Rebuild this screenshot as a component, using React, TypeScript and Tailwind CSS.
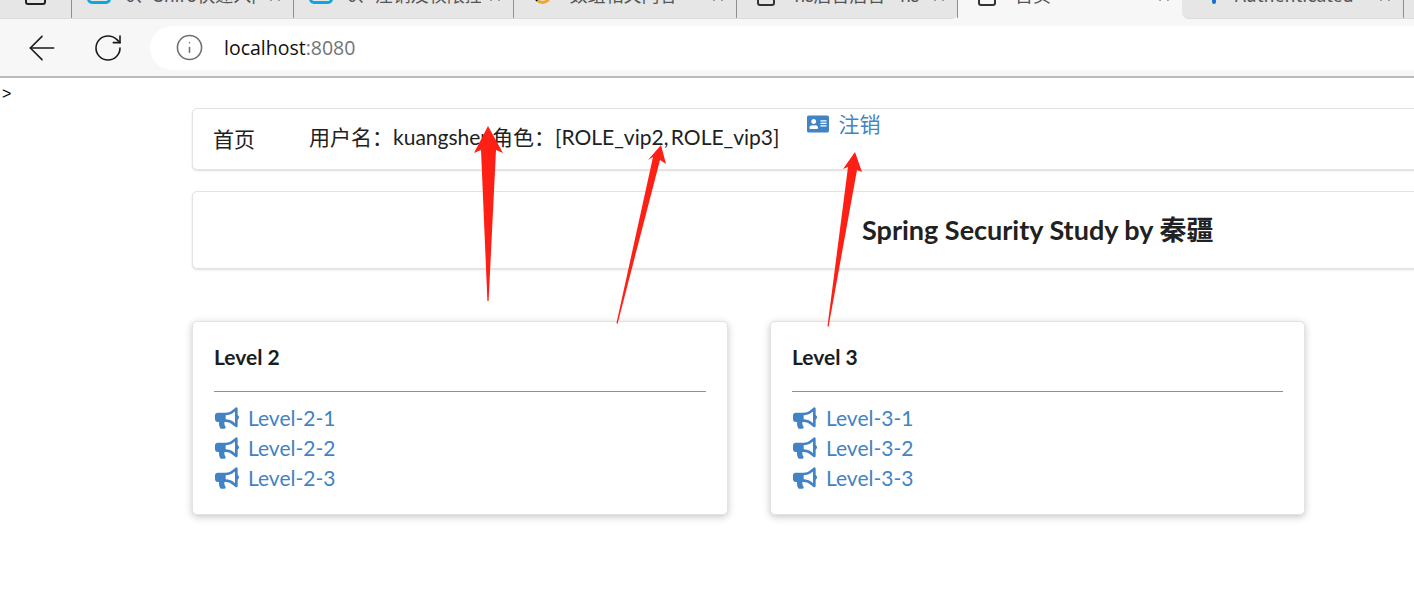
import { ArrowLeft, Info, RotateCw, X } from 'lucide-react'
import { FaAddressCard, FaBullhorn } from 'react-icons/fa'

const FONT = "font-['Lato','Noto_Sans_CJK_SC',sans-serif]"

const LEFT_TABS = [
  { width: 'w-[222px]', title: '6、Shiro快速入门', icon: 'box' },
  { width: 'w-[221px]', title: '6、注销及权限控', icon: 'box' },
  { width: 'w-[223px]', title: '数组相关内容', icon: 'ring' },
  { width: 'w-[221px]', title: 'hs后台后台 - hs', icon: 'page' },
]

// icon box plus the padding that puts the title where it sits in each tab
const ICON_CLASS: Record<string, string> = {
  box: 'ml-[15px] mr-[14px] mt-[-19px] h-[23px] w-[24px] rounded-[5px] border-[3px] border-[#10a5dc]',
  ring: 'ml-[20px] mr-[18px] mt-[-17px] h-[21px] w-[17px] rounded-full border-[3px] border-b-[#f0a52c] border-l-black border-r-[#f0a52c] border-t-transparent',
  page: 'ml-[20px] mr-[19px] mt-[-20px] h-[26px] w-[18px] rounded-[3px] border-2 border-[#333]',
  dot: 'ml-[30px] mr-[19px] mt-[-4px] h-[8px] w-[4px] rounded-full bg-[#1a73c8]',
}

function Tab({ width, title, icon, divider = true }: { width: string; title: string; icon: string; divider?: boolean }) {
  return (
    <div className={`flex h-[18px] items-start overflow-hidden pr-[10px] ${width} ${divider ? 'border-r border-[#8f8f8f]' : ''}`}>
      <span className={`shrink-0 ${ICON_CLASS[icon]}`} />
      <span className="mt-[-18px] flex-1 overflow-hidden whitespace-nowrap font-['Noto_Sans_CJK_SC',sans-serif] text-[18px] leading-[24px] text-[#555]">
        {title}
      </span>
      <X className="ml-[6px] mt-[-12px] h-[16px] w-[16px] shrink-0 text-[#333]" strokeWidth={2} />
    </div>
  )
}

function Browser() {
  return (
    <div>
      <div className="flex h-[19px] bg-[#f7f7f7]">
        <div className="flex h-[19px] w-[958px] items-start rounded-br-[7px] border-b border-[#dcdcdc] bg-[#e6e6e6]">
          <div className="flex h-[18px] w-[72px] items-start justify-center border-r border-[#8f8f8f]">
            <span className="mt-[-8px] h-[13px] w-[21px] rounded-[3px] border-2 border-[#222]" />
          </div>
          {LEFT_TABS.map((tab) => (
            <Tab key={tab.title} width={tab.width} title={tab.title} icon={tab.icon} />
          ))}
        </div>
        <Tab width="w-[224px]" title="首页" icon="page" divider={false} />
        <div className="flex h-[19px] flex-1 items-start rounded-bl-[7px] border-b border-[#dcdcdc] bg-[#e6e6e6]">
          <Tab width="w-[222px]" title="Authenticated" icon="dot" />
        </div>
      </div>
      <div className="flex h-[57px] items-center bg-[#f7f7f7] pl-[22px]">
        <ArrowLeft className="h-[40px] w-[40px] text-[#1a1a1a]" strokeWidth={0.95} />
        <RotateCw className="ml-[30px] h-[32px] w-[32px] text-[#1a1a1a]" strokeWidth={1.2} />
        <div className="ml-[26px] flex h-[44px] flex-1 items-center rounded-l-[22px] bg-white pl-[25px]">
          <Info className="h-[29px] w-[29px] text-[#6f6f6f]" strokeWidth={1.3} />
          <span className="ml-[20px] font-['Open_Sans',sans-serif] text-[19.5px] text-[#111]">
            localhost<span className="text-[#70757a]">:8080</span>
          </span>
        </div>
      </div>
      <div className="h-[2px] bg-[#bbbbbb]" />
    </div>
  )
}

function LevelCard({ level, width }: { level: number; width: string }) {
  return (
    <div className={`h-[194px] rounded-[5px] border border-[#e3e3e5] bg-white px-[21px] pt-[21px] shadow-[0_2px_7px_rgba(34,36,38,0.26)] ${width}`}>
      <div className="h-[48px] text-[21px] font-bold leading-[28px] text-[#1c1c1c]">Level {level}</div>
      <div className="h-px bg-[#909090]" />
      <div className="mt-[11px] flex flex-col">
        {[1, 2, 3].map((n) => (
          <a key={n} className="flex h-[30px] items-center text-[21px] text-[#4183c4]">
            <FaBullhorn className="ml-px mr-[9px] h-[24px] w-[24px]" />
            {`Level-${level}-${n}`}
          </a>
        ))}
      </div>
    </div>
  )
}

export default function App() {
  return (
    <div className={`relative h-[607px] w-[1414px] overflow-hidden bg-white ${FONT}`}>
      <Browser />
      <div className="h-[30px] pl-[2px] pt-[7px] font-['Liberation_Sans',sans-serif] text-[16px] leading-[18px] text-black">&gt;</div>
      <div className="pl-[192px]">
        <div className="flex h-[62px] w-[1400px] items-start rounded-[5px] border border-[#e3e3e5] bg-white text-[21px] text-[#212121] shadow-[0_1px_2px_rgba(34,36,38,0.15)]">
          <span className="ml-[20px] mt-[15px] leading-[30px]">首页</span>
          <span className="ml-[54px] mt-[13px] leading-[30px] [word-spacing:-3px]">用户名：kuangshen角色：[ROLE_vip2, ROLE_vip3]</span>
          <a className="ml-[28px] flex items-center gap-[9px] text-[#4183c4]">
            <FaAddressCard className="h-[24px] w-[22px]" />
            <span className="leading-[30px]">注销</span>
          </a>
        </div>
        <div className="mt-[21px] flex h-[78px] w-[1400px] items-center rounded-[5px] border border-[#e3e3e5] bg-white pl-[669px] text-[27px] font-bold text-[#212121] shadow-[0_1px_2px_rgba(34,36,38,0.15)]">
          Spring Security Study by 秦疆
        </div>
        <div className="mt-[52px] flex gap-[42px]">
          <LevelCard level={2} width="w-[536px]" />
          <LevelCard level={3} width="w-[535px]" />
        </div>
      </div>
      <svg className="pointer-events-none absolute left-0 top-0" width="1414" height="607">
        <polygon fill="#ff2015" points="488,126 503,153 496,150 488.6,301 487.4,301 481,150 474,153" />
        <polygon fill="#ff2015" points="661,145 666,164 660,160 617.5,324 616.5,323 653,157 648,160" />
        <polygon fill="#ff2015" points="855,152 862,172 857,170 828.5,327 827.5,326 848,167 843,169" />
      </svg>
    </div>
  )
}
